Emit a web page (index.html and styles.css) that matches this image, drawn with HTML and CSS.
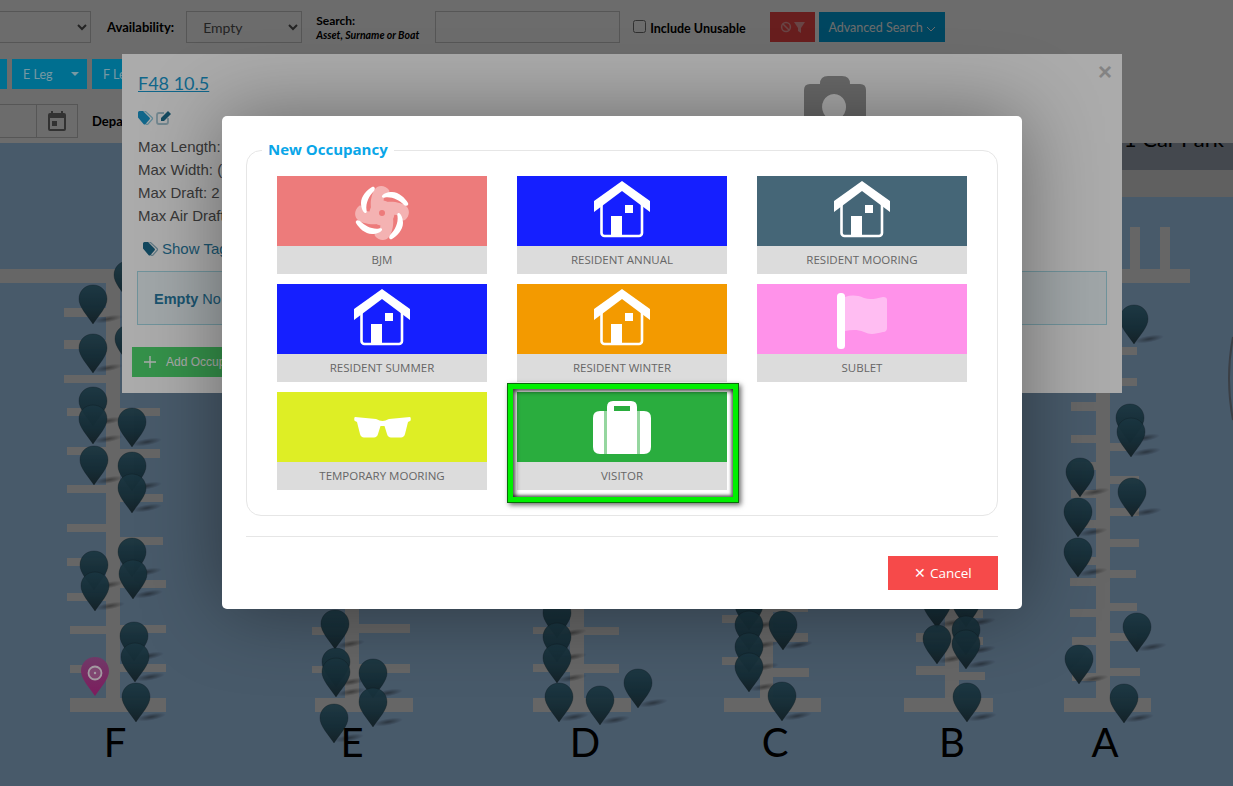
FILE: index.html
```html
<!DOCTYPE html>
<html lang="en">
<head>
    <meta charset="UTF-8">
    <meta name="viewport" content="width=device-width, initial-scale=1.0">
    <title>Marina Occupancy</title>
    <link rel="stylesheet" href="styles.css">
</head>
<body>

<svg class="icon-defs" width="0" height="0">
    <defs>
        <symbol id="house" viewBox="0 0 58 57">
            <path d="M29 0 L57 20 V31 L29 10 L1 31 V20 Z" fill="#fff"/>
            <path d="M8.5 20 V52 a3 3 0 0 0 3 3 H46 a3 3 0 0 0 3-3 V20" fill="none" stroke="#fff" stroke-width="2.6"/>
            <rect x="18" y="35" width="11" height="20" fill="#fff"/>
            <rect x="32" y="24" width="8" height="8" fill="#fff"/>
        </symbol>
        <path id="fanArm" d="M-7-24 C-4-28 3-28 7-23 C8-21 7-20 5-19 C2-17 1-14 2-9 L-11-5 C-12-12 -10-20 -7-24Z"/>
        <path id="fanBlade" d="M-10-26 C-15-23 -21-17 -21-10 C-21-5 -19-1 -17 0 C-15.5 .5 -15-1 -15.5-3 C-16.5-10 -13-17 -8-22 C-6-25 -8-27 -10-26Z"/>
        <radialGradient id="shadowFill">
            <stop offset="0" stop-color="#000" stop-opacity="0.4"/>
            <stop offset="1" stop-color="#000" stop-opacity="0"/>
        </radialGradient>
        <linearGradient id="pinFill" x1="0" y1="0" x2="0" y2="1">
            <stop offset="0" stop-color="#3f7f99" stop-opacity="0.93"/>
            <stop offset="0.6" stop-color="#30667c" stop-opacity="0.96"/>
            <stop offset="1" stop-color="#34525e"/>
        </linearGradient>
        <linearGradient id="pinFillActive" x1="0" y1="0" x2="0" y2="1">
            <stop offset="0" stop-color="#a8559a"/>
            <stop offset="1" stop-color="#bb2b8c"/>
        </linearGradient>
        <g id="pin">
            <ellipse cx="15" cy="-5" rx="15" ry="3.5" transform="rotate(-10 15 -5)" fill="url(#shadowFill)"/>
            <path d="M0 0 C-6 -9 -14 -17 -14 -25 C-14 -33 -8 -39 0 -39 C8 -39 14 -33 14 -25 C14 -17 6 -9 0 0 Z" fill="url(#pinFill)" stroke="#173039" stroke-opacity="0.5" stroke-width="0.6"/>
        </g>
    </defs>
</svg>

<header class="toolbar">
    <div class="toolbar-row">
        <select class="field select-first"><option></option></select>
        <label class="field-label label-avail">Availability:</label>
        <select class="field select-avail"><option>Empty</option></select>
        <div class="search-label">
            <strong>Search:</strong>
            <em>Asset, Surname or Boat</em>
        </div>
        <input class="field search-input" type="text">
        <label class="check-label"><input type="checkbox"> Include Unusable</label>
        <button class="btn btn-red" type="button">
            <svg width="26" height="14" viewBox="0 0 26 14">
                <circle cx="6" cy="7" r="4.4" fill="none" stroke="#f7a3a3" stroke-width="1.5"/>
                <path d="M3 4 L9 10" stroke="#f7a3a3" stroke-width="1.5"/>
                <path d="M14 2 H25 L21 8 V13 L18 11 V8 Z" fill="#f7a3a3"/>
            </svg>
        </button>
        <button class="btn btn-blue btn-advanced" type="button">
            Advanced Search
            <svg width="10" height="6" viewBox="0 0 10 6"><path d="M1 1 L5 5 L9 1" fill="none" stroke="#fff" stroke-width="1"/></svg>
        </button>
    </div>
    <div class="toolbar-row row-legs">
        <button class="btn btn-leg btn-leg-cut" type="button"></button>
        <button class="btn btn-leg" type="button">E Leg <span class="caret"></span></button>
        <button class="btn btn-leg btn-leg-f" type="button">F Leg <span class="caret"></span></button>
    </div>
    <div class="toolbar-row row-dates">
        <div class="date-group">
            <input class="date-input" type="text">
            <span class="date-addon">
                <svg width="18" height="20" viewBox="0 0 18 20">
                    <path d="M3 0 H5 V2 H13 V0 H15 V2 H16 A2 2 0 0 1 18 4 V18 A2 2 0 0 1 16 20 H2 A2 2 0 0 1 0 18 V4 A2 2 0 0 1 2 2 H3 Z M2 7 V18 H16 V7 Z" fill="#777" fill-rule="evenodd"/>
                    <rect x="4" y="10" width="5" height="5" fill="#777"/>
                </svg>
            </span>
        </div>
        <label class="field-label label-depart">Departure:</label>
    </div>
</header>

<svg class="map" viewBox="0 143 1233 643">
    <rect class="water" x="0" y="143" width="1233" height="643"/>
    <rect x="800" y="143" width="433" height="27" fill="#a2abba"/>
    <text class="car-park" x="1224" y="147" text-anchor="end">1 Car Park</text>
    <rect class="pier-wide" x="800" y="170" width="433" height="27"/>
    <rect class="pier" x="1130" y="227" width="10" height="43"/>
    <rect class="pier" x="1160" y="227" width="10" height="43"/>
    <rect class="pier" x="0" y="269" width="1190" height="14"/>
    <path d="M1233 337 Q1225 378 1233 420" fill="none" stroke="#8c97a5" stroke-width="2"/>

    <!-- F -->
    <g class="pier">
        <rect x="106" y="282" width="14" height="420"/>
        <rect x="70" y="698" width="96" height="14"/>
        <rect x="64" y="308" width="42" height="9"/>
        <rect x="64" y="340" width="42" height="9"/>
        <rect x="64" y="375" width="42" height="8"/>
        <rect x="67" y="408" width="39" height="8"/>
        <rect x="67" y="447" width="39" height="8"/>
        <rect x="67" y="485" width="39" height="8"/>
        <rect x="67" y="524" width="39" height="8"/>
        <rect x="67" y="558" width="39" height="8"/>
        <rect x="67" y="593" width="39" height="8"/>
        <rect x="70" y="626" width="36" height="8"/>
        <rect x="70" y="665" width="36" height="8"/>
        <rect x="120" y="408" width="40" height="8"/>
        <rect x="120" y="449" width="40" height="9"/>
        <rect x="120" y="494" width="43" height="8"/>
        <rect x="120" y="537" width="43" height="8"/>
        <rect x="120" y="580" width="46" height="8"/>
        <rect x="120" y="625" width="46" height="8"/>
        <rect x="120" y="664" width="46" height="8"/>
    </g>
    <!-- E -->
    <g class="pier">
        <rect x="345" y="600" width="14" height="100"/>
        <rect x="315" y="698" width="98" height="14"/>
        <rect x="312" y="627" width="33" height="8"/>
        <rect x="312" y="666" width="33" height="7"/>
        <rect x="359" y="624" width="51" height="9"/>
        <rect x="359" y="664" width="51" height="9"/>
    </g>
    <!-- D -->
    <g class="pier">
        <rect x="570" y="600" width="14" height="100"/>
        <rect x="533" y="698" width="98" height="14"/>
        <rect x="533" y="627" width="37" height="7"/>
        <rect x="533" y="664" width="37" height="8"/>
        <rect x="584" y="627" width="35" height="8"/>
        <rect x="584" y="664" width="35" height="9"/>
    </g>
    <!-- C -->
    <g class="pier">
        <rect x="760" y="600" width="13" height="100"/>
        <rect x="724" y="698" width="97" height="14"/>
        <rect x="722" y="615" width="38" height="8"/>
        <rect x="722" y="657" width="38" height="8"/>
        <rect x="773" y="608" width="35" height="4"/>
        <rect x="773" y="633" width="35" height="9"/>
        <rect x="773" y="668" width="36" height="9"/>
    </g>
    <!-- B -->
    <g class="pier">
        <rect x="945" y="600" width="14" height="100"/>
        <rect x="904" y="698" width="89" height="14"/>
        <rect x="916" y="633" width="29" height="9"/>
        <rect x="916" y="666" width="29" height="9"/>
        <rect x="959" y="610" width="24" height="8"/>
        <rect x="959" y="637" width="24" height="8"/>
        <rect x="959" y="672" width="26" height="8"/>
    </g>
    <!-- A -->
    <g class="pier">
        <rect x="1096" y="283" width="14" height="417"/>
        <rect x="1064" y="698" width="87" height="14"/>
        <rect x="1071" y="402" width="25" height="9"/>
        <rect x="1071" y="435" width="25" height="8"/>
        <rect x="1071" y="462" width="25" height="8"/>
        <rect x="1071" y="490" width="25" height="8"/>
        <rect x="1071" y="520" width="25" height="8"/>
        <rect x="1071" y="557" width="25" height="8"/>
        <rect x="1070" y="578" width="26" height="8"/>
        <rect x="1070" y="609" width="26" height="8"/>
        <rect x="1072" y="637" width="24" height="8"/>
        <rect x="1072" y="673" width="24" height="8"/>
        <rect x="1110" y="347" width="27" height="8"/>
        <rect x="1110" y="378" width="27" height="8"/>
        <rect x="1110" y="443" width="25" height="8"/>
        <rect x="1110" y="476" width="29" height="8"/>
        <rect x="1110" y="508" width="29" height="8"/>
        <rect x="1110" y="539" width="29" height="8"/>
        <rect x="1110" y="570" width="26" height="8"/>
        <rect x="1110" y="603" width="27" height="8"/>
        <rect x="1110" y="633" width="27" height="8"/>
        <rect x="1110" y="668" width="30" height="8"/>
    </g>

    <!-- pins F -->
    <use href="#pin" x="128" y="300"/>
    <use href="#pin" x="129" y="364"/>
    <use href="#pin" x="93" y="324"/>
    <use href="#pin" x="93" y="373"/>
    <use href="#pin" x="93" y="426"/>
    <use href="#pin" x="93" y="444"/>
    <use href="#pin" x="132" y="447"/>
    <use href="#pin" x="94" y="485"/>
    <use href="#pin" x="132" y="491"/>
    <use href="#pin" x="132" y="513"/>
    <use href="#pin" x="132" y="577"/>
    <use href="#pin" x="94" y="590"/>
    <use href="#pin" x="133" y="599"/>
    <use href="#pin" x="95" y="611"/>
    <use href="#pin" x="134" y="661"/>
    <use href="#pin" x="135" y="682"/>
    <use href="#pin" x="136" y="722"/>
    <!-- pins E -->
    <use href="#pin" x="335" y="649"/>
    <use href="#pin" x="336" y="687"/>
    <use href="#pin" x="336" y="697"/>
    <use href="#pin" x="373" y="698"/>
    <use href="#pin" x="373" y="727"/>
    <use href="#pin" x="334" y="743"/>
    <!-- pins D -->
    <use href="#pin" x="557" y="638"/>
    <use href="#pin" x="557" y="662"/>
    <use href="#pin" x="557" y="683"/>
    <use href="#pin" x="638" y="708"/>
    <use href="#pin" x="559" y="722"/>
    <use href="#pin" x="600" y="725"/>
    <!-- pins C -->
    <use href="#pin" x="749" y="630"/>
    <use href="#pin" x="749" y="650"/>
    <use href="#pin" x="749" y="672"/>
    <use href="#pin" x="749" y="692"/>
    <use href="#pin" x="783" y="650"/>
    <use href="#pin" x="782" y="721"/>
    <!-- pins B -->
    <use href="#pin" x="937" y="628"/>
    <use href="#pin" x="966" y="627"/>
    <use href="#pin" x="966" y="655"/>
    <use href="#pin" x="937" y="664"/>
    <use href="#pin" x="966" y="669"/>
    <use href="#pin" x="967" y="722"/>
    <!-- pins A -->
    <use href="#pin" x="1134" y="344"/>
    <use href="#pin" x="1130" y="443"/>
    <use href="#pin" x="1131" y="457"/>
    <use href="#pin" x="1080" y="497"/>
    <use href="#pin" x="1132" y="517"/>
    <use href="#pin" x="1078" y="537"/>
    <use href="#pin" x="1078" y="577"/>
    <use href="#pin" x="1137" y="652"/>
    <use href="#pin" x="1079" y="684"/>
    <use href="#pin" x="1124" y="723"/>

    <text class="leg-name" x="115" y="757" text-anchor="middle">F</text>
    <text class="leg-name" x="352" y="757" text-anchor="middle">E</text>
    <text class="leg-name" x="585" y="757" text-anchor="middle">D</text>
    <text class="leg-name" x="775" y="757" text-anchor="middle">C</text>
    <text class="leg-name" x="952" y="757" text-anchor="middle">B</text>
    <text class="leg-name" x="1105" y="757" text-anchor="middle">A</text>
</svg>

<div class="overlay overlay-low"></div>

<svg class="pin-active" width="28" height="39" viewBox="0 0 28 39">
    <path d="M14 39 C8 30 0 22 0 14 C0 6 6 0 14 0 C22 0 28 6 28 14 C28 22 20 30 14 39 Z" fill="url(#pinFillActive)"/>
    <circle cx="14" cy="16" r="6.5" fill="#fff" fill-opacity="0.2" stroke="#fff" stroke-opacity="0.85" stroke-width="1.8"/>
    <circle cx="14" cy="16" r="1.2" fill="#fff" fill-opacity="0.85"/>
</svg>

<section class="asset-modal">
    <button class="asset-close" type="button">&times;</button>
    <svg class="asset-camera" width="62" height="60" viewBox="0 0 62 60">
        <path d="M16 8 Q16 0 24 0 H38 Q46 0 46 8 H56 Q62 8 62 14 V54 Q62 60 56 60 H6 Q0 60 0 54 V14 Q0 8 6 8 Z M30 18 A12 13 0 1 0 30.1 18 Z" fill="#9d9d9d" fill-rule="evenodd"/>
    </svg>
    <a class="asset-title" href="#">F48 10.5</a>
    <div class="asset-tools">
        <svg width="16" height="14" viewBox="0 0 16 14">
            <path d="M4 0 H7 L14 6.5 Q15 7.5 14 8.5 L10 13 Q9 14 8 13 L4 9" fill="none" stroke="#8ecbe0" stroke-width="1.2"/>
            <path d="M0 1.5 Q0 0 1.5 0 H5 L11.5 6.5 Q12.5 7.5 11.5 8.5 L7.5 13 Q6.5 14 5.5 13 L0 6.5 Z" fill="#1a9ad0"/>
        </svg>
        <svg width="16" height="14" viewBox="0 0 16 14">
            <path d="M8 2 H3 Q1 2 1 4 V11 Q1 13 3 13 H10 Q12 13 12 11 V7" fill="none" stroke="#a9c8d4" stroke-width="1.8"/>
            <path d="M5 7 L12 0 L15 3 L8 10 H5 Z" fill="#1f6f90"/>
        </svg>
    </div>
    <ul class="asset-specs">
        <li>Max Length: 10.5</li>
        <li>Max Width: (0)</li>
        <li>Max Draft: 2</li>
        <li>Max Air Draft: 0</li>
    </ul>
    <a class="asset-tags" href="#">
        <svg width="16" height="14" viewBox="0 0 16 14">
            <path d="M4 0 H7 L14 6.5 Q15 7.5 14 8.5 L10 13 Q9 14 8 13 L4 9" fill="none" stroke="#8fb4c4" stroke-width="1.2"/>
            <path d="M0 1.5 Q0 0 1.5 0 H5 L11.5 6.5 Q12.5 7.5 11.5 8.5 L7.5 13 Q6.5 14 5.5 13 L0 6.5 Z" fill="#1c6a8c"/>
        </svg>
        Show Tags
    </a>
    <div class="asset-alert"><strong>Empty</strong> No current occupancy</div>
    <button class="asset-add" type="button">
        <svg width="12" height="12" viewBox="0 0 12 12"><path d="M6 0 V12 M0 6 H12" stroke="#fff" stroke-width="1.4"/></svg>
        Add Occupancy
    </button>
</section>

<div class="overlay overlay-top">
    <section class="occupancy-modal">
        <fieldset class="occupancy-box">
            <legend>New Occupancy</legend>
            <div class="occupancy-grid">
                <a class="occ-card" href="#">
                    <span class="occ-icon bg-bjm">
                        <svg class="icon-fan" width="60" height="60" viewBox="-30 -30 60 60">
                            <g fill="#fff" opacity="0.42">
                                <circle r="12.5"/>
                                <use href="#fanArm"/>
                                <use href="#fanArm" transform="rotate(90)"/>
                                <use href="#fanArm" transform="rotate(180)"/>
                                <use href="#fanArm" transform="rotate(270)"/>
                            </g>
                            <g fill="#fff">
                                <use href="#fanBlade"/>
                                <use href="#fanBlade" transform="rotate(90)"/>
                                <use href="#fanBlade" transform="rotate(180)"/>
                                <use href="#fanBlade" transform="rotate(270)"/>
                            </g>
                            <circle r="3" fill="#ed7b7b"/>
                        </svg>
                    </span>
                    <span class="occ-label">BJM</span>
                </a>
                <a class="occ-card" href="#">
                    <span class="occ-icon bg-blue"><svg class="icon-house" width="58" height="57"><use href="#house"/></svg></span>
                    <span class="occ-label">RESIDENT ANNUAL</span>
                </a>
                <a class="occ-card" href="#">
                    <span class="occ-icon bg-slate"><svg class="icon-house" width="58" height="57"><use href="#house"/></svg></span>
                    <span class="occ-label">RESIDENT MOORING</span>
                </a>
                <a class="occ-card" href="#">
                    <span class="occ-icon bg-blue"><svg class="icon-house" width="58" height="57"><use href="#house"/></svg></span>
                    <span class="occ-label">RESIDENT SUMMER</span>
                </a>
                <a class="occ-card" href="#">
                    <span class="occ-icon bg-orange"><svg class="icon-house" width="58" height="57"><use href="#house"/></svg></span>
                    <span class="occ-label">RESIDENT WINTER</span>
                </a>
                <a class="occ-card" href="#">
                    <span class="occ-icon bg-pink">
                        <svg class="icon-flag" width="50" height="56" viewBox="0 0 50 56">
                            <rect width="8" height="56" rx="3.5" fill="#fff"/>
                            <path d="M8 4 C14 2 20 2 27 5 C33 7 38 6 46 4 C49 4 50 5 50 7 V35 C50 37 49 39 46 39 C38 41 33 42 27 39 C20 36 14 37 8 38 Z" fill="#fff" fill-opacity="0.4"/>
                        </svg>
                    </span>
                    <span class="occ-label">SUBLET</span>
                </a>
                <a class="occ-card" href="#">
                    <span class="occ-icon bg-lime">
                        <svg width="57" height="21" viewBox="0 0 57 21">
                            <path d="M1 0 L22 2 C25 3 26 4 28.5 4 C31 4 32 3 35 2 L56 0 C57 0 57 4 56 4 L54 5 L51 17 C50.5 19 49 20.5 47 20.5 H37 C35 20.5 33.5 19 33 17 L30.5 9 H26.5 L24 17 C23.5 19 22 20.5 20 20.5 H10 C8 20.5 6.5 19 6 17 L3 5 L1 4 C0 4 0 0 1 0 Z" fill="#fff"/>
                        </svg>
                    </span>
                    <span class="occ-label">TEMPORARY MOORING</span>
                </a>
                <a class="occ-card occ-selected" href="#">
                    <span class="occ-icon bg-green">
                        <svg width="58" height="53" viewBox="0 0 58 53">
                            <path d="M14 10 V6 Q14 0 20 0 H38 Q44 0 44 6 V10 V53 H14 Z M21 5 V10 H37 V5 Z" fill="#fff" fill-rule="evenodd"/>
                            <path d="M11 10 H14 V53 H11 Z M44 10 H47 V53 H44 Z" fill="#fff" fill-opacity="0.5"/>
                            <path d="M11 10 V53 H7 Q0 53 0 46 V17 Q0 10 7 10 Z M47 10 H51 Q58 10 58 17 V46 Q58 53 51 53 H47 Z" fill="#fff"/>
                        </svg>
                    </span>
                    <span class="occ-label">VISITOR</span>
                </a>
            </div>
        </fieldset>
        <hr class="occupancy-rule">
        <div class="occupancy-actions">
            <button class="btn-cancel" type="button">&#10005; Cancel</button>
        </div>
    </section>
</div>

</body>
</html>
```

FILE: styles.css
```css
* {
    box-sizing: border-box;
}

html, body {
    margin: 0;
    height: 100%;
}

body {
    position: relative;
    width: 1233px;
    height: 786px;
    overflow: hidden;
    background-color: #fff;
    font-family: 'Lato', sans-serif;
    color: #000;
}

.icon-defs {
    position: absolute;
}

/* toolbar */
.toolbar {
    height: 143px;
    padding-top: 11px;
    background-color: #fff;
}

.toolbar-row {
    display: flex;
    align-items: center;
    height: 32px;
}

.field {
    height: 32px;
    border: 1px solid #ccc;
    background-color: #fff;
    color: #555;
    font-family: 'Lato', sans-serif;
    font-size: 14px;
}

.select-first {
    width: 151px;
    margin-left: -60px;
}

.field-label {
    font-size: 13px;
    font-weight: 700;
}

.label-avail {
    margin-left: 16px;
}

.select-avail {
    width: 116px;
    margin-left: 12px;
    padding-left: 12px;
}

.search-label {
    display: flex;
    flex-direction: column;
    width: 119px;
    margin-left: 14px;
}

.search-label strong {
    font-size: 12px;
    line-height: 15px;
}

.search-label em {
    margin-top: 1px;
    font-size: 10.5px;
    font-weight: 700;
    line-height: 13px;
}

.search-input {
    width: 185px;
}

.check-label {
    display: flex;
    align-items: center;
    width: 137px;
    margin: 2px 0 0 13px;
    font-size: 12.5px;
    font-weight: 700;
}

.check-label input {
    margin: 0 4px 4px 0;
}

.btn {
    border: none;
    color: #fff;
    font-family: 'Lato', sans-serif;
    font-size: 13px;
}

.btn-red {
    display: flex;
    align-items: center;
    justify-content: center;
    width: 45px;
    height: 30px;
    background-color: #f64a4a;
}

.btn-blue {
    background-color: #00a7e2;
}

.btn-advanced {
    width: 126px;
    height: 30px;
    margin-left: 4px;
    padding: 0;
    font-size: 12.5px;
}

.row-legs {
    height: 30px;
    margin-top: 16px;
}

.btn-leg {
    position: relative;
    z-index: 11;
    display: flex;
    align-items: center;
    justify-content: space-between;
    width: 75px;
    height: 30px;
    margin-left: 4px;
    padding: 0 8px 0 11px;
    background-color: #00a6d7;
    color: rgba(255, 255, 255, 0.7);
    font-size: 12.5px;
}

.btn-leg-cut {
    width: 40px;
    margin-left: -33px;
    margin-right: 1px;
}

.btn-leg-f {
    margin-left: 5px;
}

.caret {
    width: 0;
    height: 0;
    border-top: 4px solid rgba(255, 255, 255, 0.7);
    border-left: 4px solid transparent;
    border-right: 4px solid transparent;
}

.row-dates {
    height: 34px;
    margin-top: 15px;
}

.date-group {
    display: flex;
    height: 34px;
    width: 78px;
}

.date-input {
    width: 37px;
    border: 1px solid #ccc;
    border-left: none;
}

.date-addon {
    display: flex;
    align-items: center;
    justify-content: center;
    width: 41px;
    border: 1px solid #ccc;
    border-left: none;
}

.label-depart {
    margin-left: 14px;
}

/* map */
.map {
    display: block;
    width: 1233px;
    height: 643px;
}

.water {
    fill: #abd4fc;
}

.pier {
    fill: #f3f3f3;
}

.pier-wide {
    fill: #e2e2e2;
}

.car-park {
    font-family: 'Lato', sans-serif;
    font-size: 22px;
    fill: #000;
}

.leg-name {
    font-family: 'Lato', sans-serif;
    font-size: 40px;
    fill: #000;
}

.pin-active {
    position: absolute;
    z-index: 11;
    top: 657px;
    left: 81px;
}

/* overlays */
.overlay {
    position: absolute;
    top: 0;
    left: 0;
    width: 100%;
    height: 100%;
}

.overlay-low {
    z-index: 10;
    background-color: rgba(0, 0, 0, 0.37);
}

.overlay-top {
    z-index: 20;
    padding: 116px 0 0 222px;
    background-color: rgba(0, 0, 0, 0.33);
}

/* asset dialog underneath */
.asset-modal {
    position: absolute;
    z-index: 12;
    top: 54px;
    left: 122px;
    width: 1000px;
    height: 339px;
    padding: 17px 15px 16px 16px;
    background-color: #fff;
    font-family: 'Liberation Sans', sans-serif;
}

.asset-close {
    position: absolute;
    top: 6px;
    right: 10px;
    padding: 0;
    border: none;
    background: none;
    color: #c4c4c4;
    font-family: 'Liberation Sans', sans-serif;
    font-size: 24px;
    font-weight: 700;
    line-height: 24px;
}

.asset-camera {
    position: absolute;
    top: 22px;
    left: 682px;
}

.asset-title {
    display: block;
    font-family: 'Lato', sans-serif;
    font-size: 18px;
    line-height: 24px;
    color: #1a9ad0;
    text-decoration: underline;
}

.asset-tools {
    display: flex;
    gap: 2px;
    height: 14px;
    margin-top: 16px;
}

.asset-specs {
    list-style: none;
    margin: 10px 0 0;
    padding: 0;
    font-size: 15px;
    line-height: 23px;
    color: #555;
}

.asset-tags {
    display: flex;
    align-items: center;
    gap: 3px;
    height: 23px;
    margin: 10px 0 0 5px;
    font-size: 15px;
    color: #2b7ea6;
    text-decoration: none;
}

.asset-alert {
    height: 54px;
    margin: 11px 0 0 -1px;
    padding: 0 16px;
    border: 1px solid #a8dbe8;
    background-color: #eff8fb;
    font-size: 14.5px;
    line-height: 54px;
    color: #2b7ea6;
}

.asset-add {
    display: flex;
    align-items: center;
    gap: 10px;
    width: 180px;
    height: 30px;
    margin: 22px 0 0 -6px;
    padding: 0 0 0 12px;
    border: none;
    background-color: #4fd96f;
    color: #fff;
    font-family: 'Liberation Sans', sans-serif;
    font-size: 12px;
}

/* occupancy dialog */
.occupancy-modal {
    width: 800px;
    height: 493px;
    padding: 24px 24px 19px;
    border-radius: 5px;
    background-color: #fff;
    box-shadow: 0 0 80px rgba(0, 0, 0, 0.4);
}

.occupancy-box {
    width: 752px;
    height: 376px;
    margin: 0;
    padding: 16px 30px 25px;
    border: 1px solid #e6e6e6;
    border-radius: 15px;
}

.occupancy-box legend {
    margin-left: -15px;
    padding: 0 6px 2px;
    font-family: 'Open Sans', sans-serif;
    font-size: 15px;
    font-weight: 700;
    line-height: 18px;
    color: #09a6e8;
}

.occupancy-grid {
    display: grid;
    grid-template-columns: repeat(3, 210px);
    grid-auto-rows: 98px;
    column-gap: 30px;
    row-gap: 10px;
}

.occ-card {
    position: relative;
    display: flex;
    flex-direction: column;
    text-decoration: none;
}

.occ-icon {
    display: flex;
    align-items: center;
    justify-content: center;
    height: 70px;
}

.icon-house {
    margin-bottom: 4px;
}

.icon-flag {
    margin-top: 4px;
}

.icon-fan {
    margin-top: 3px;
}

.occ-label {
    display: flex;
    align-items: center;
    justify-content: center;
    height: 28px;
    padding-bottom: 2px;
    background-color: #dcdcdc;
    font-family: 'Open Sans', sans-serif;
    font-size: 11.5px;
    color: #666;
}

.occ-selected::after {
    content: "";
    position: absolute;
    top: -9px;
    left: -10px;
    right: -12px;
    bottom: -13px;
    border: 6px solid #00f000;
    outline: 1px solid #0a6a0a;
    outline-offset: -1px;
    box-shadow: 2px 2px 5px rgba(0, 0, 0, 0.6), inset 2px 2px 5px rgba(0, 0, 0, 0.8), inset -2px -2px 3px rgba(0, 0, 0, 0.5);
}

.bg-bjm { background-color: #ed7b7b; }
.bg-blue { background-color: #151fff; }
.bg-slate { background-color: #456677; }
.bg-orange { background-color: #f39a00; }
.bg-pink { background-color: #ff92ea; }
.bg-lime { background-color: #deee25; }
.bg-green { background-color: #2aad3e; }

.occupancy-rule {
    height: 1px;
    margin: 20px 0 19px;
    border: none;
    background-color: #e6e6e6;
}

.occupancy-actions {
    display: flex;
    justify-content: flex-end;
}

.btn-cancel {
    width: 110px;
    height: 34px;
    border: none;
    background-color: #f64a4a;
    color: #fff;
    font-family: 'Open Sans', sans-serif;
    font-size: 13.5px;
}
```
